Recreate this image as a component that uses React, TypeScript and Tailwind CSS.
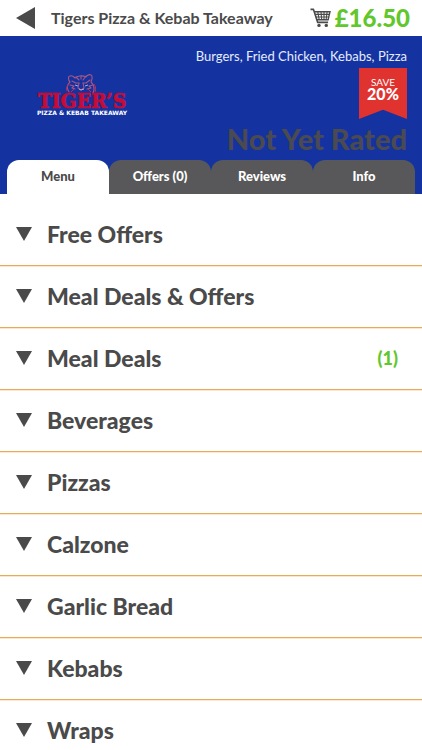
import { useState } from 'react'

type Category = {
    name: string
    count?: number
}

const tabs = ['Menu', 'Offers (0)', 'Reviews', 'Info']

const categories: Category[] = [
    { name: 'Free Offers' },
    { name: 'Meal Deals & Offers' },
    { name: 'Meal Deals', count: 1 },
    { name: 'Beverages' },
    { name: 'Pizzas' },
    { name: 'Calzone' },
    { name: 'Garlic Bread' },
    { name: 'Kebabs' },
    { name: 'Wraps' },
]

function CartIcon() {
    return (
        <svg viewBox="0 0 21 20" className="w-[21px] h-5" fill="none" stroke="#4a4a4a" aria-hidden="true">
            <path d="M0.5 1.4h3l4.2 13h10.4" strokeWidth="1.6" strokeLinejoin="round" />
            <path d="M4.2 3.8h15.8l-1.9 8H6.8" strokeWidth="1.4" />
            <path d="M5 6.4h14.4M5.8 9h13" strokeWidth="1.1" />
            <path d="M7.8 4l1.4 7.8M11 4l0.7 7.8M14 4v7.8M17.1 4l-1 7.8" strokeWidth="1.1" />
            <circle cx="9" cy="17.4" r="1.7" fill="#4a4a4a" stroke="none" />
            <circle cx="16.3" cy="17.4" r="1.7" fill="#4a4a4a" stroke="none" />
        </svg>
    )
}

function Logo() {
    return (
        <svg viewBox="0 0 92 46" className="w-[92px] h-[46px]" role="img" aria-label="Tiger's Pizza & Kebab Takeaway">
            {/* tiger head */}
            <g fill="none" stroke="#a65586" strokeWidth="1.1" strokeLinecap="round" strokeLinejoin="round">
                <path d="M33 20c-3-4-1-8 1-10-2-2-2-6 0-6 2-1 3 0 5 2 2-2 7-3 11-1 1-2 4-3 5-2 2 1 1 5 0 7 3 3 4 7 2 11" />
                <path d="M40 5l3 3M50 4l-3 4M45 4v3M36 9l4 2 3 0M54 8l-4 3-3 0" />
                <path d="M34 13l4 1-2 2 3 1M57 13l-4 1 2 2-4 1" />
                <path d="M43 11l-1 5 3 2 3-2-1-5" />
            </g>
            <path d="M39 13l3 1M49 14l3-1M43 17l2 1 3-1" fill="none" stroke="#b9a6d0" strokeWidth="1" />
            <path d="M31 19c-1-3 0-5 2-7M58 12c2 3 2 5 1 8M35 20l3-3M55 20l-3-3" fill="none" stroke="#c02c55" strokeWidth="1" />
            <text
                x="46"
                y="36"
                textAnchor="middle"
                fontSize="21"
                fontWeight="700"
                fill="#c60c36"
                stroke="#c60c36"
                strokeWidth="0.7"
                fontFamily="'DejaVu Serif Condensed', 'DejaVu Serif', serif"
            >
                TIGER’S
            </text>
            <text
                x="46"
                y="43"
                textAnchor="middle"
                fontSize="6"
                fontWeight="700"
                fill="#ffffff"
                fontFamily="'DejaVu Sans', sans-serif"
            >
                PIZZA &amp; KEBAB TAKEAWAY
            </text>
        </svg>
    )
}

function SaveRibbon() {
    return (
        <div className="w-12 h-[51px] pt-2 bg-[#e0322f] text-white text-center [clip-path:polygon(0_0,100%_0,100%_100%,50%_82%,0_100%)]">
            <p className="text-[10px] leading-3">SAVE</p>
            <p className="text-base leading-3 font-black">20%</p>
        </div>
    )
}

function CategoryRow({ category }: { category: Category }) {
    return (
        <li className="border-b border-solid border-[#e9a95a] shadow-[0_1px_0_#fbe8cd]">
            <button type="button" className="flex items-center w-full h-[61px] pb-px pl-4 pr-6 text-left cursor-pointer">
                <svg viewBox="0 0 16 14" className="w-4 h-3.5 mr-[15px]" fill="#4a4a4a" aria-hidden="true">
                    <path d="M0 0h16L8 14z" />
                </svg>
                <span className="flex-1 text-[23px] font-black">{category.name}</span>
                {category.count && <span className="text-lg font-black text-[#62c72c]">({category.count})</span>}
            </button>
        </li>
    )
}

function App() {
    const [selectedTab, setSelectedTab] = useState('Menu')

    return (
        <div className="flex flex-col h-screen bg-white text-[#4a4a4a] font-['Lato',sans-serif]">
            {/* title bar */}
            <header className="flex items-center h-9 shrink-0 pl-4 pr-3">
                <button type="button" aria-label="Back" className="mr-4 cursor-pointer">
                    <svg viewBox="0 0 19 22" className="w-[19px] h-[22px]" fill="#4a4a4a" aria-hidden="true">
                        <path d="M19 0v22L0 11z" />
                    </svg>
                </button>
                <h1 className="flex-1 text-base font-bold whitespace-nowrap">Tigers Pizza &amp; Kebab Takeaway</h1>
                <button type="button" className="flex items-center gap-1 cursor-pointer">
                    <CartIcon />
                    <span className="text-2xl font-black text-[#62c72c]">£16.50</span>
                </button>
            </header>

            {/* restaurant banner */}
            <section className="shrink-0 bg-[#1433a0]">
                <div className="flex justify-between pl-9 pr-[15px] h-[124px]">
                    <div className="pt-9">
                        <Logo />
                    </div>
                    <div className="flex flex-col items-end pt-2">
                        <p className="text-[13px] leading-6 text-[#e4ecff]">Burgers, Fried Chicken, Kebabs, Pizza</p>
                        <SaveRibbon />
                        <p className="text-[29px] leading-10 font-black text-[#4a4a50]">Not Yet Rated</p>
                    </div>
                </div>
                <nav className="flex px-[7px]">
                    {tabs.map((tab) => (
                        <button
                            key={tab}
                            type="button"
                            onClick={() => setSelectedTab(tab)}
                            className={`flex-1 h-[34px] rounded-t-xl text-[13px] font-black cursor-pointer ${
                                selectedTab === tab ? 'bg-white' : 'bg-[#58585a] text-white'
                            }`}
                        >
                            {tab}
                        </button>
                    ))}
                </nav>
            </section>

            {/* menu categories */}
            <ul className="flex-1 pt-2.5 overflow-y-auto [scrollbar-width:none]">
                {categories.map((category) => (
                    <CategoryRow key={category.name} category={category} />
                ))}
            </ul>
        </div>
    )
}

export default App
